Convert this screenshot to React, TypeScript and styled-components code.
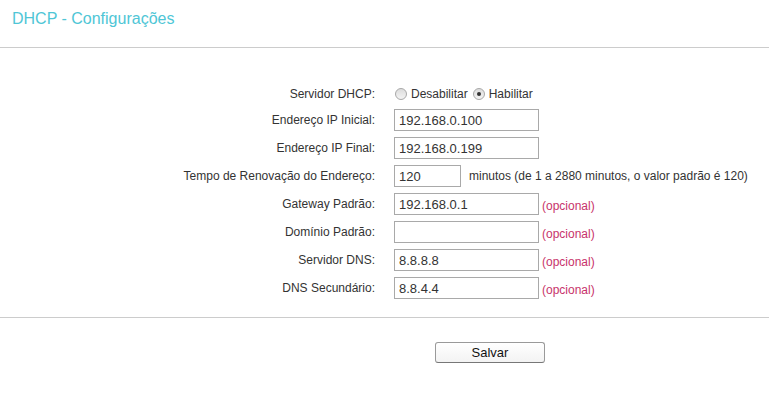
import { createGlobalStyle } from "styled-components";
import styled from "styled-components";

const GlobalStyle = createGlobalStyle`
  html, body {
    margin: 0;
    padding: 0;
    background: #ffffff;
    font-family: "Liberation Sans", Arial, sans-serif;
    color: #333333;
  }
`;

const Page = styled.div`
  width: 769px;
  min-height: 401px;
  background: #fff;
`;

const Header = styled.div`
  padding: 10px 12px 19px;
  border-bottom: 1px solid #cccccc;
`;

const Title = styled.h1`
  margin: 0;
  font-size: 16px;
  line-height: 18px;
  font-weight: normal;
  color: #4fc6d6;
`;

const Form = styled.div`
  display: grid;
  grid-template-columns: 375px 1fr;
  column-gap: 19px;
  padding: 34px 0 15px;
  border-bottom: 1px solid #cccccc;
`;

const Label = styled.div<{ $h: number }>`
  height: ${(p) => p.$h}px;
  display: flex;
  align-items: center;
  justify-content: flex-end;
  font-size: 12px;
  color: #333;
  white-space: nowrap;
`;

const Control = styled.div<{ $h: number }>`
  height: ${(p) => p.$h}px;
  display: flex;
  align-items: center;
  font-size: 12px;
  white-space: nowrap;
`;

const RadioLabel = styled.label`
  display: inline-flex;
  align-items: center;
  gap: 4px;
  margin-right: 5px;
  color: #333;
`;

const Radio = styled.span<{ $checked?: boolean }>`
  position: relative;
  width: 10px;
  height: 10px;
  border-radius: 50%;
  border: 1px solid #a8a8a8;
  background: linear-gradient(#dcdcdc, #f4f4f4);
  &::after {
    content: "";
    display: ${(p) => (p.$checked ? "block" : "none")};
    position: absolute;
    left: 3px;
    top: 3px;
    width: 4px;
    height: 4px;
    border-radius: 50%;
    background: #333;
  }
`;

const RadioGroup = styled.div`
  display: flex;
  align-items: center;
  padding-left: 1px;
`;

const Input = styled.input<{ $w: number }>`
  box-sizing: border-box;
  width: ${(p) => p.$w}px;
  height: 22px;
  border: 1px solid #a9a9a9;
  padding: 0 4px;
  margin: 0;
  font-family: "Liberation Sans", Arial, sans-serif;
  font-size: 13px;
  color: #333;
  outline: none;
`;

const Hint = styled.span<{ $gap: number; $optional?: boolean }>`
  margin-left: ${(p) => p.$gap}px;
  margin-top: ${(p) => (p.$optional ? 3 : 0)}px;
  color: ${(p) => (p.$optional ? "#c8336b" : "#333")};
  font-size: 12px;
`;

const Footer = styled.div`
  padding: 24px 0 0 435px;
`;

const SaveButton = styled.button`
  width: 110px;
  height: 21px;
  border: 1px solid #9a9a9a;
  border-bottom-color: #777;
  border-radius: 3px;
  background: linear-gradient(#ffffff, #f3f3f3);
  font-family: "Liberation Sans", Arial, sans-serif;
  font-size: 13px;
  color: #111;
  padding: 0;
`;

type Field = {
  label: string;
  value: string;
  width: number;
  hint?: string;
  optional?: boolean;
};

const fields: Field[] = [
  { label: "Endereço IP Inicial:", value: "192.168.0.100", width: 145 },
  { label: "Endereço IP Final:", value: "192.168.0.199", width: 145 },
  {
    label: "Tempo de Renovação do Endereço:",
    value: "120",
    width: 67,
    hint: "minutos (de 1 a 2880 minutos, o valor padrão é 120)",
  },
  { label: "Gateway Padrão:", value: "192.168.0.1", width: 145, hint: "(opcional)", optional: true },
  { label: "Domínio Padrão:", value: "", width: 145, hint: "(opcional)", optional: true },
  { label: "Servidor DNS:", value: "8.8.8.8", width: 145, hint: "(opcional)", optional: true },
  { label: "DNS Secundário:", value: "8.8.4.4", width: 145, hint: "(opcional)", optional: true },
];

export default function App() {
  return (
    <Page>
      <GlobalStyle />
      <Header>
        <Title>DHCP - Configurações</Title>
      </Header>
      <Form>
        <Label $h={24}>Servidor DHCP:</Label>
        <Control $h={24}>
          <RadioGroup>
            <RadioLabel>
              <Radio />
              Desabilitar
            </RadioLabel>
            <RadioLabel>
              <Radio $checked />
              Habilitar
            </RadioLabel>
          </RadioGroup>
        </Control>
        {fields.map((f) => (
          <>
            <Label key={f.label + "l"} $h={28}>{f.label}</Label>
            <Control key={f.label + "c"} $h={28}>
              <Input $w={f.width} defaultValue={f.value} />
              {f.hint && (
                <Hint $gap={f.optional ? 3 : 8} $optional={f.optional}>
                  {f.hint}
                </Hint>
              )}
            </Control>
          </>
        ))}
      </Form>
      <Footer>
        <SaveButton>Salvar</SaveButton>
      </Footer>
    </Page>
  );
}
